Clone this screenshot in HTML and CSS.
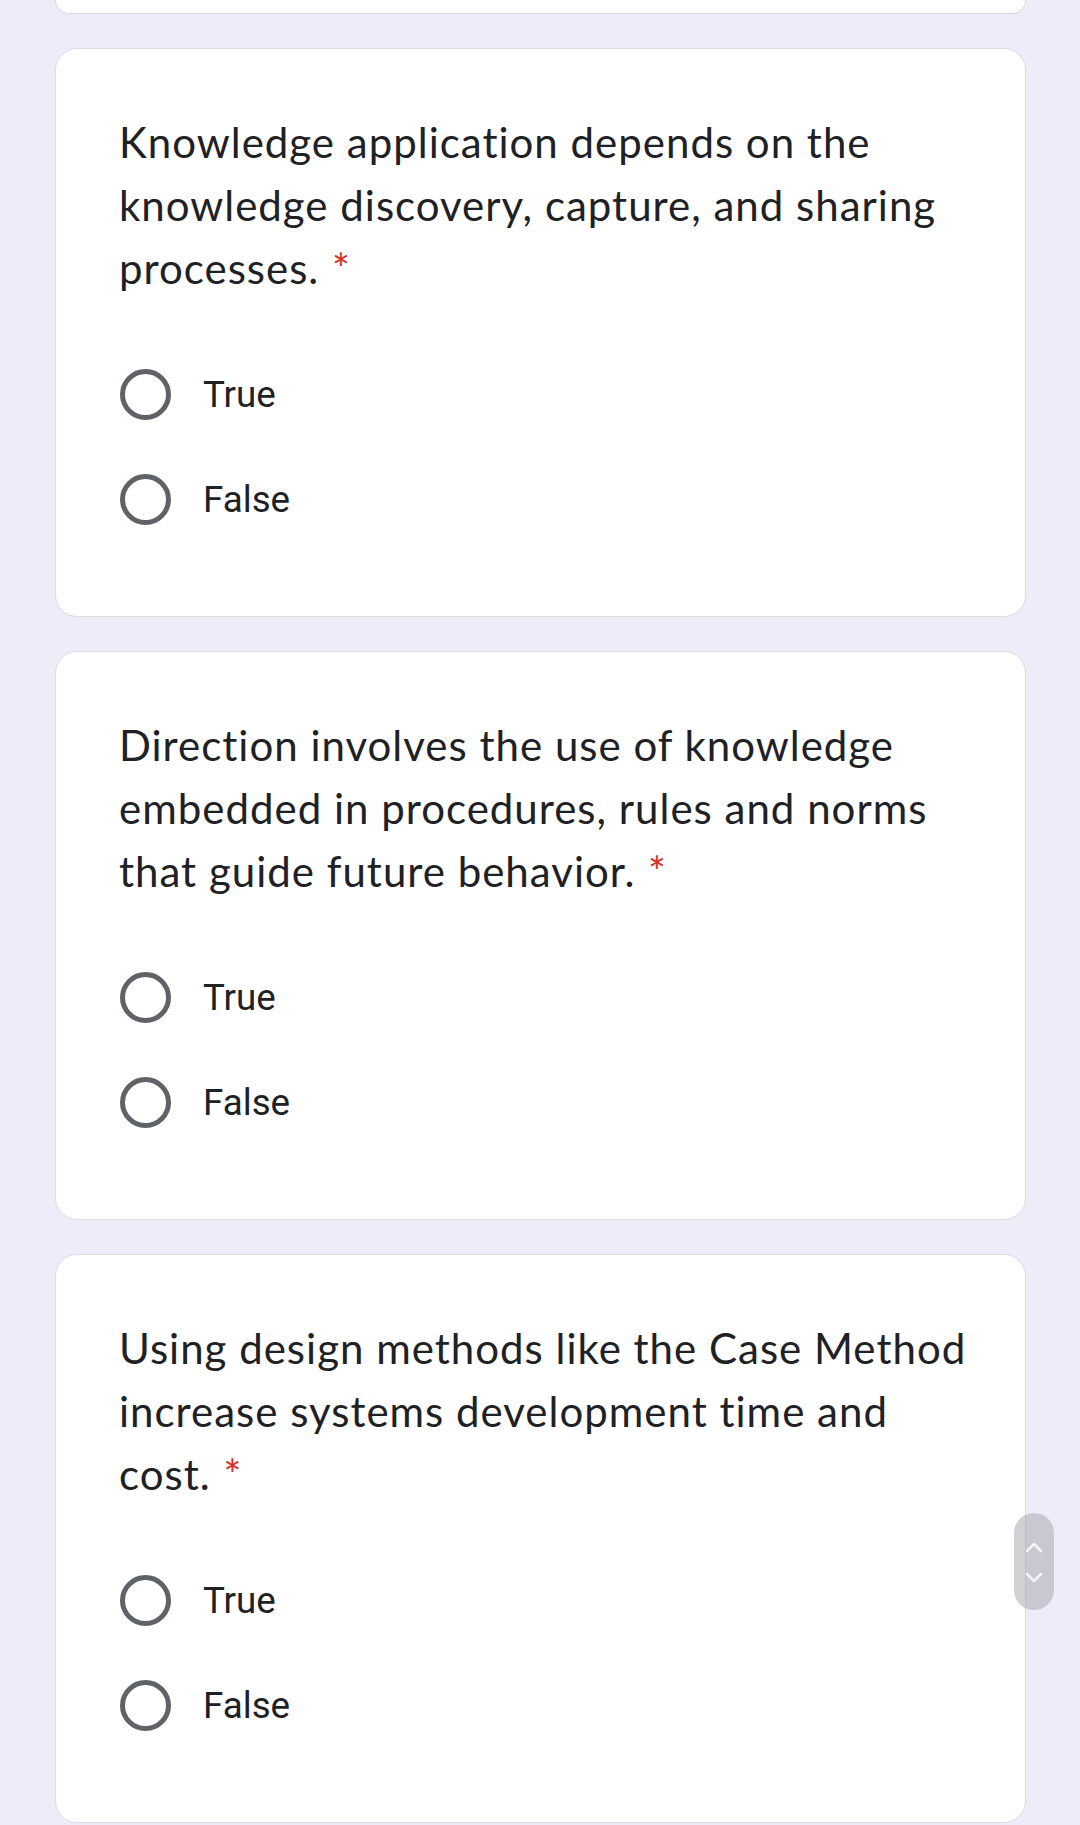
FILE: index.html
```html
<!DOCTYPE html>
<html lang="en">
<head>
<meta charset="utf-8">
<title>Form</title>
<link rel="stylesheet" href="styles.css">
</head>
<body>
<main class="form">
  <div class="card card-stub"></div>

  <section class="card">
    <div class="question">Knowledge application depends on the knowledge discovery, capture, and sharing processes. <span class="req">*</span></div>
    <div class="options">
      <label class="option"><span class="radio"></span><span class="label">True</span></label>
      <label class="option"><span class="radio"></span><span class="label">False</span></label>
    </div>
  </section>

  <section class="card">
    <div class="question">Direction involves the use of knowledge embedded in procedures, rules and norms that guide future behavior. <span class="req">*</span></div>
    <div class="options">
      <label class="option"><span class="radio"></span><span class="label">True</span></label>
      <label class="option"><span class="radio"></span><span class="label">False</span></label>
    </div>
  </section>

  <section class="card">
    <div class="question">Using design methods like the Case Method increase systems development time and cost. <span class="req">*</span></div>
    <div class="options">
      <label class="option"><span class="radio"></span><span class="label">True</span></label>
      <label class="option"><span class="radio"></span><span class="label">False</span></label>
    </div>
  </section>
</main>

<div class="scroller">
  <svg width="40" height="97" viewBox="0 0 40 97">
    <path d="M13 38 L20 31 L27 38" fill="none" stroke="#ffffff" stroke-opacity="0.8" stroke-width="2.5" stroke-linecap="round" stroke-linejoin="round"/>
    <path d="M13 61 L20 68 L27 61" fill="none" stroke="#ffffff" stroke-opacity="0.8" stroke-width="2.5" stroke-linecap="round" stroke-linejoin="round"/>
  </svg>
</div>
</body>
</html>
```

FILE: styles.css
```css
html, body {
  margin: 0;
  padding: 0;
}

body {
  background: #f0ebf8;
  width: 1080px;
  height: 1825px;
  overflow: hidden;
  font-family: "Lato", "Open Sans", sans-serif;
  color: #202124;
}

.form {
  display: flex;
  flex-direction: column;
  gap: 34px;
  padding: 0 54px 0 55px;
}

.card {
  background: #ffffff;
  border: 1.5px solid #dadce0;
  border-radius: 22px;
  padding: 62px 40px 62px 63px;
  box-sizing: border-box;
  height: 569px;
}

.card-stub {
  height: 14px;
  padding: 0;
  border-top: none;
  border-radius: 0 0 22px 22px;
}

.question {
  font-size: 42px;
  line-height: 63px;
  max-width: 858px;
  letter-spacing: 1px;
  font-variant-ligatures: none;
}

.req {
  color: #d93025;
  padding-left: 1px;
  letter-spacing: 0;
}

.options {
  display: flex;
  flex-direction: column;
  margin-top: 42px;
}

.option {
  display: flex;
  align-items: center;
  height: 105px;
}

.radio {
  width: 51px;
  height: 51px;
  box-sizing: border-box;
  border: 5px solid #5f6368;
  border-radius: 50%;
  margin-left: 1px;
  flex: none;
}

.label {
  font-family: "Roboto", sans-serif;
  font-size: 36.75px;
  margin-left: 32px;
  color: #202124;
}

.scroller {
  position: fixed;
  left: 1014px;
  top: 1513px;
  width: 40px;
  height: 97px;
  border-radius: 20px;
  background: rgba(170, 170, 178, 0.55);
}

.scroller svg {
  display: block;
}
```
